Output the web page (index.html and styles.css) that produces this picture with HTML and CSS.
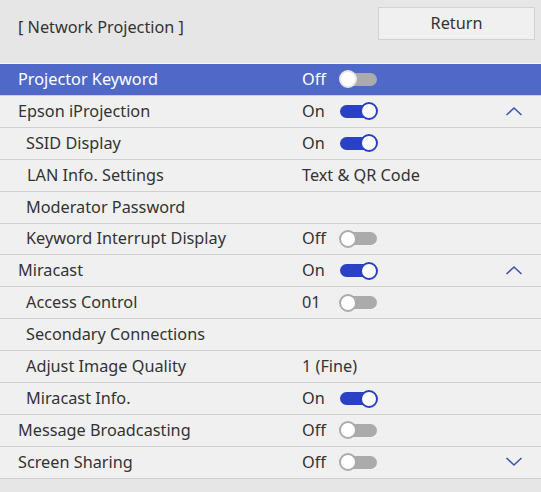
FILE: index.html
```html
<!DOCTYPE html>
<html>
<head>
<meta charset="utf-8">
<link rel="stylesheet" href="styles.css">
</head>
<body>
<div class="screen">
  <div class="header">
    <div class="title">[ Network Projection ]</div>
    <div class="return-btn">Return</div>
  </div>
  <div class="list">
    <div class="row selected">
      <span class="label">Projector Keyword</span>
      <span class="value">Off</span><span class="toggle off"><span class="knob"></span></span>
    </div>
    <div class="row">
      <span class="label">Epson iProjection</span>
      <span class="value">On</span><span class="toggle on"><span class="knob"></span></span>
      <svg class="chev" width="18" height="10" viewBox="0 0 18 10"><path d="M1.5 9 L9 2 L16.5 9" fill="none" stroke="#3c55b0" stroke-width="1.6"/></svg>
    </div>
    <div class="row sub">
      <span class="label">SSID Display</span>
      <span class="value">On</span><span class="toggle on"><span class="knob"></span></span>
    </div>
    <div class="row sub lan">
      <span class="label">LAN Info. Settings</span>
      <span class="value">Text &amp; QR Code</span>
    </div>
    <div class="row sub">
      <span class="label">Moderator Password</span>
    </div>
    <div class="row sub">
      <span class="label">Keyword Interrupt Display</span>
      <span class="value">Off</span><span class="toggle off"><span class="knob"></span></span>
    </div>
    <div class="row">
      <span class="label">Miracast</span>
      <span class="value">On</span><span class="toggle on"><span class="knob"></span></span>
      <svg class="chev" width="18" height="10" viewBox="0 0 18 10"><path d="M1.5 9 L9 2 L16.5 9" fill="none" stroke="#3c55b0" stroke-width="1.6"/></svg>
    </div>
    <div class="row sub">
      <span class="label">Access Control</span>
      <span class="value">01</span><span class="toggle off"><span class="knob"></span></span>
    </div>
    <div class="row sub">
      <span class="label">Secondary Connections</span>
    </div>
    <div class="row sub">
      <span class="label">Adjust Image Quality</span>
      <span class="value">1 (Fine)</span>
    </div>
    <div class="row sub">
      <span class="label">Miracast Info.</span>
      <span class="value">On</span><span class="toggle on"><span class="knob"></span></span>
    </div>
    <div class="row">
      <span class="label">Message Broadcasting</span>
      <span class="value">Off</span><span class="toggle off"><span class="knob"></span></span>
    </div>
    <div class="row">
      <span class="label">Screen Sharing</span>
      <span class="value">Off</span><span class="toggle off"><span class="knob"></span></span>
      <svg class="chev" width="18" height="10" viewBox="0 0 18 10"><path d="M1.5 1 L9 8 L16.5 1" fill="none" stroke="#3c55b0" stroke-width="1.6"/></svg>
    </div>
  </div>
  <div class="footer"></div>
</div>
</body>
</html>
```

FILE: styles.css
```css
html, body {
  margin: 0;
  padding: 0;
  background: #e6e6e6;
}
.screen {
  width: 541px;
  height: 492px;
  font-family: "Noto Sans", "Open Sans", sans-serif;
  font-size: 16.25px;
  color: #333333;
  background: #e6e6e6;
  overflow: hidden;
}
.header {
  height: 63px;
  display: flex;
  align-items: flex-start;
  justify-content: space-between;
  box-sizing: border-box;
  padding: 7px 6px 0 18px;
}
.title {
  margin-top: 9px;
  line-height: 22px;
}
.return-btn {
  width: 157px;
  height: 33px;
  box-sizing: border-box;
  border: 1.5px solid #d2d2d2;
  background: #f0f0f0;
  display: flex;
  align-items: center;
  justify-content: center;
  padding-bottom: 1px;
}
.list {
  border-top: 1px solid #f6f6f6;
}
.row {
  height: 29.92px;
  border-bottom: 1px solid #d0d0d0;
  background: #f0f0f0;
  display: flex;
  align-items: center;
  padding-left: 18px;
  padding-bottom: 1px;
  box-sizing: content-box;
  position: relative;
}
.row.sub {
  padding-left: 26px;
}
.row.sub.lan {
  padding-left: 27px;
}
.row.selected {
  background: #5069c9;
  color: #ffffff;
}
.label {
  width: 284px;
  flex: none;
}
.row.sub .label {
  width: 276px;
}
.row.sub.lan .label {
  width: 275px;
}
.value {
  width: 38px;
  flex: none;
  white-space: nowrap;
}
.toggle {
  width: 37px;
  height: 13px;
  border-radius: 7px;
  position: relative;
  flex: none;
  margin-top: 1px;
}
.toggle.on {
  background: #2a41c6;
}
.toggle.off {
  background: #ababab;
}
.knob {
  position: absolute;
  top: -2.5px;
  width: 14px;
  height: 14px;
  border-radius: 50%;
  background: #ffffff;
  border: 2px solid #2a41c6;
}
.toggle.on .knob {
  right: -1px;
}
.toggle.off .knob {
  left: -1px;
  border-color: #ababab;
}
.row.selected .toggle.off .knob {
  border-color: #e8e8e8;
}
.chev {
  position: absolute;
  left: 505px;
  top: 10px;
}
.footer {
  height: 13px;
}
```
